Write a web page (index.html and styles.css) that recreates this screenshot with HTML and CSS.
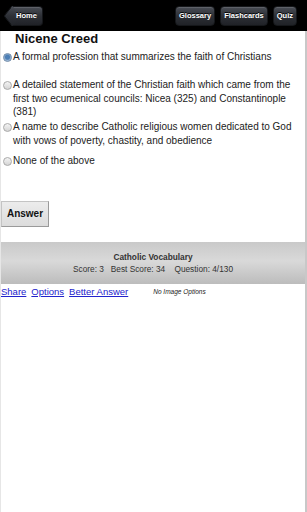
FILE: index.html
```html
<!DOCTYPE html>
<html lang="en">
<head>
    <meta charset="UTF-8">
    <title>Catholic Vocabulary Quiz</title>
    <link rel="stylesheet" href="styles.css">
</head>
<body>
    <div class="page">
        <div class="topbar">
            <a class="tb-btn tb-back" href="#">Home</a>
            <div class="tb-right">
                <a class="tb-btn" href="#">Glossary</a>
                <a class="tb-btn" href="#">Flashcards</a>
                <a class="tb-btn" href="#">Quiz</a>
            </div>
        </div>

        <h1 class="term">Nicene Creed</h1>

        <form class="choices">
            <label class="choice choice-first">
                <span class="radio checked"></span>
                <span class="choice-text">A formal profession that summarizes the faith of Christians</span>
            </label>
            <label class="choice choice-second">
                <span class="radio"></span>
                <span class="choice-text">A detailed statement of the Christian faith which came from the first two ecumenical councils: Nicea (325) and Constantinople (381)</span>
            </label>
            <label class="choice choice-third">
                <span class="radio"></span>
                <span class="choice-text">A name to describe Catholic religious women dedicated to God with vows of poverty, chastity, and obedience</span>
            </label>
            <label class="choice choice-fourth">
                <span class="radio"></span>
                <span class="choice-text">None of the above</span>
            </label>

            <button type="button" class="answer-btn">Answer</button>
        </form>

        <div class="status">
            <div class="status-title">Catholic Vocabulary</div>
            <div class="status-line">Score: 3&nbsp;&nbsp;&nbsp;Best Score: 34&nbsp;&nbsp;&nbsp;&nbsp;Question: 4/130</div>
        </div>

        <div class="links">
            <a href="#">Share</a>
            <a href="#">Options</a>
            <a href="#">Better Answer</a>
            <span class="no-image">No Image Options</span>
        </div>
    </div>
</body>
</html>
```

FILE: styles.css
```css
html, body {
    margin: 0;
    padding: 0;
    height: 100%;
}

body {
    font-family: "Liberation Sans", Arial, sans-serif;
    background-color: white;
    color: #111;
}

.page {
    min-height: 100%;
    box-sizing: border-box;
    border-left: 1px solid #e6e6e6;
    border-right: 2px solid #c8c8c8;
}

.topbar {
    height: 31px;
    background-color: #000;
    display: flex;
    align-items: center;
    justify-content: space-between;
    padding: 0 10px 0 5px;
    margin: 0 -2px 0 -1px;
}

.tb-right {
    display: flex;
    gap: 5px;
}

.tb-btn {
    display: block;
    position: relative;
    z-index: 0;
    height: 18px;
    line-height: 18px;
    padding: 0 3px;
    font-size: 7.5px;
    font-weight: bold;
    color: white;
    text-decoration: none;
    border: 1px solid #15171a;
    border-radius: 4px;
    background: linear-gradient(#4a4e56, #2d3036 50%, #202227);
    box-shadow: inset 0 1px 0 rgba(255,255,255,0.12);
    text-shadow: 0 -1px 0 #000;
}

.tb-back {
    margin-left: 6px;
    padding: 0 5px 0 5px;
    border-left: none;
    border-radius: 0 4px 4px 0;
}

.tb-back::before {
    content: "";
    position: absolute;
    left: -6px;
    top: 2px;
    width: 13px;
    height: 13px;
    transform: rotate(45deg) skew(6deg, 6deg);
    background: linear-gradient(135deg, #4a4e56, #2d3036 50%, #202227);
    border-left: 1px solid #15171a;
    border-bottom: 1px solid #15171a;
    border-radius: 0 0 0 3px;
    z-index: -1;
}

.term {
    margin: 0;
    padding-left: 14px;
    font-size: 13px;
    line-height: 15px;
    font-weight: bold;
    color: #111;
}

.choices {
    margin: 0;
    padding: 0;
}

.choice {
    display: flex;
    align-items: flex-start;
    font-size: 10px;
    line-height: 13.5px;
    color: #222;
    padding-right: 4px;
}

.choice-first { margin-top: 4px; }
.choice-second { margin-top: 14.5px; }
.choice-third { margin-top: 1.5px; }
.choice-fourth { margin-top: 7px; }

.radio {
    flex: none;
    width: 7px;
    height: 7px;
    margin: 3px 1px 0 2px;
    border-radius: 50%;
    border: 1px solid #a9a9a9;
    background: linear-gradient(#f4f4f4, #d4d4d4);
}

.radio.checked {
    border-color: #6f8aa8;
    background: radial-gradient(circle at 50% 45%, #4d7fb5 0, #4d7fb5 40%, #a9c2dd 70%, #dfe8f2 100%);
}

.answer-btn {
    display: block;
    margin: 33px 0 0 0;
    width: 48px;
    height: 26px;
    font-family: "Liberation Sans", Arial, sans-serif;
    font-size: 10px;
    font-weight: bold;
    color: #111;
    background: linear-gradient(#ececec, #dcdcdc);
    border: 1px solid #c4c4c4;
    border-right-color: #9a9a9a;
    border-bottom-color: #9a9a9a;
    padding: 0;
}

.status {
    margin-top: 15px;
    height: 42px;
    display: flex;
    flex-direction: column;
    justify-content: center;
    align-items: center;
    background: linear-gradient(#c9c9c9, #d9d9d9 45%, #bcbcbc);
    font-size: 8.3px;
    line-height: 12px;
    color: #333;
}

.status-title {
    font-weight: bold;
}

.links {
    display: flex;
    align-items: center;
    height: 16px;
    font-size: 9.5px;
}

.links a {
    color: #2222cc;
    text-decoration: underline;
    margin-right: 5px;
}

.no-image {
    margin-left: 20px;
    font-size: 6.5px;
    font-style: italic;
    color: #222;
}
```
